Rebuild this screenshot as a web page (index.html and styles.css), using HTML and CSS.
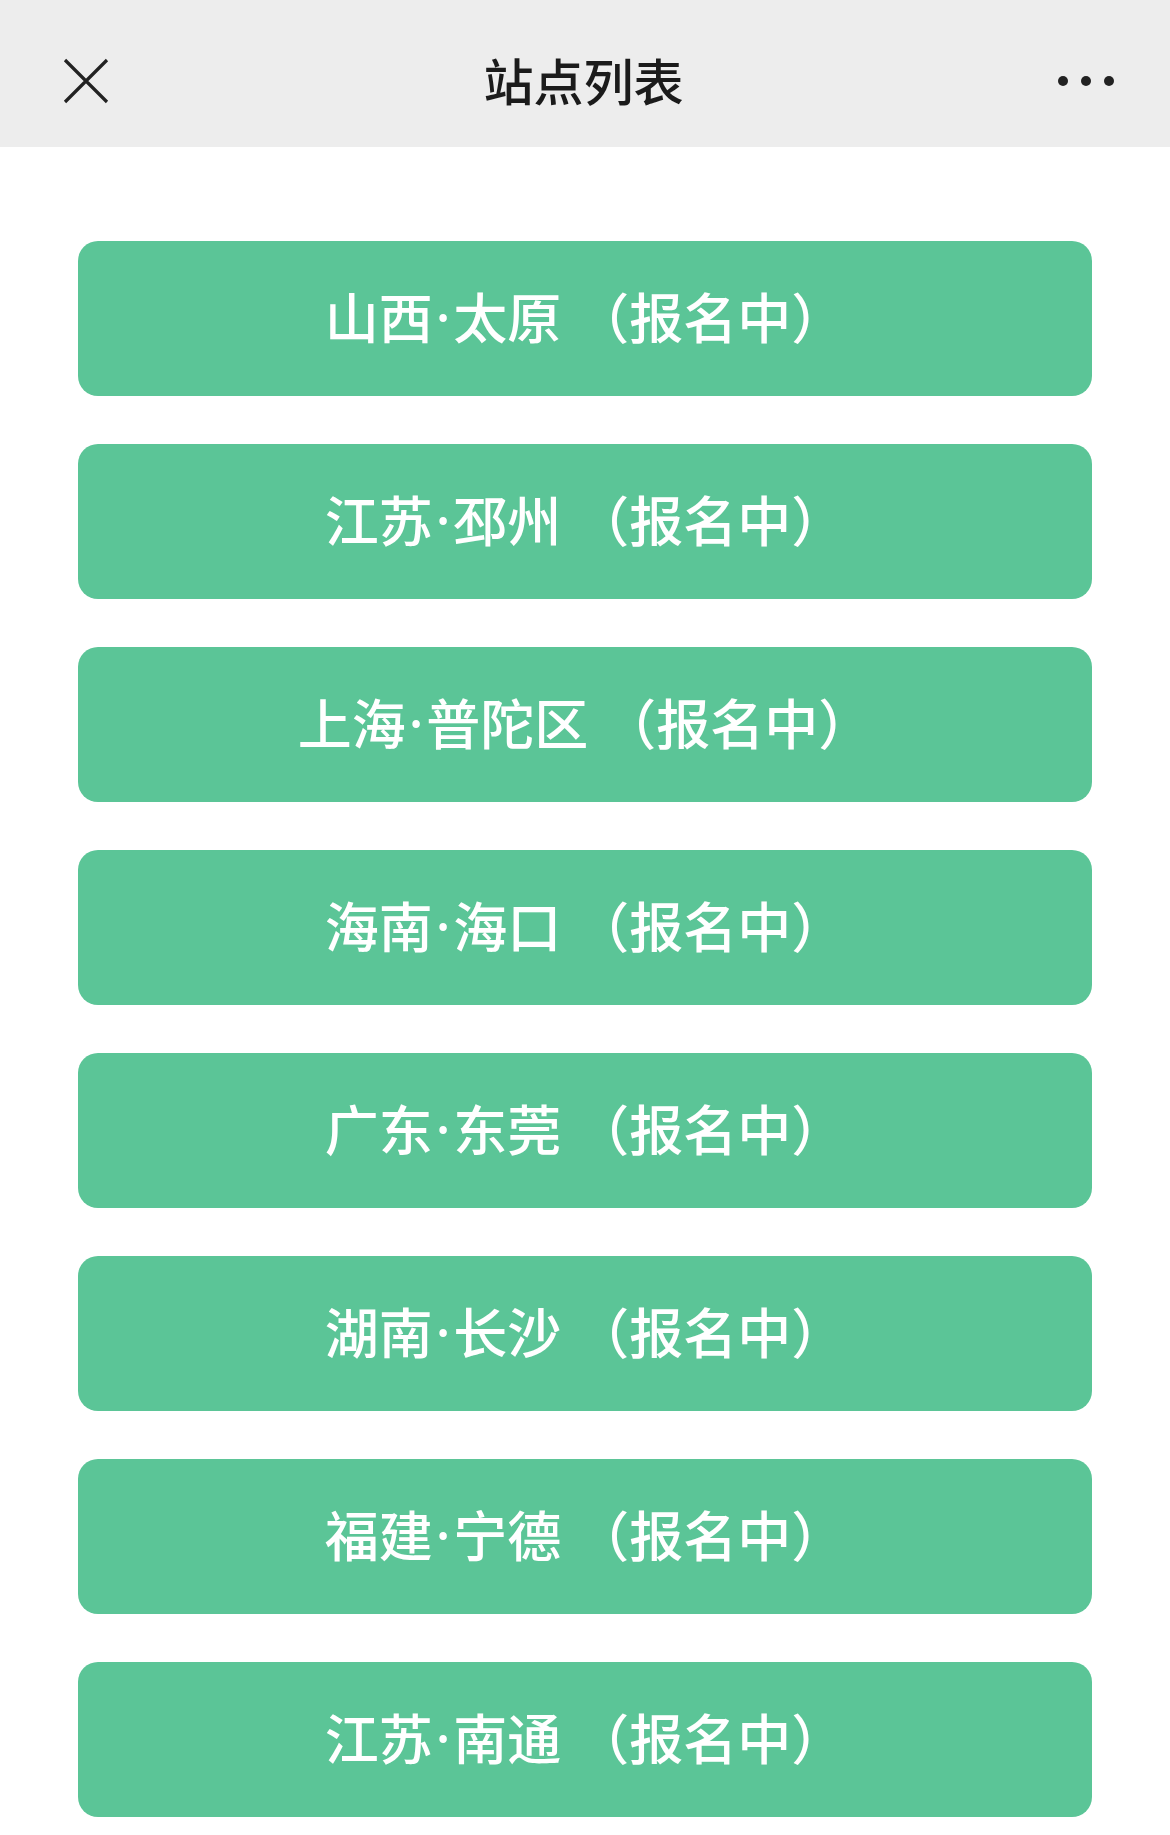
FILE: index.html
```html
<!doctype html>
<html>
<head>
  <meta charset="utf-8">
  <link rel="stylesheet" href="styles.css">
</head>
<body>
  <header class="topbar">
    <span class="close">
      <svg width="46" height="46" viewBox="0 0 46 46">
        <path d="M2 2 L44 44 M44 2 L2 44" stroke="#222" stroke-width="3.2" fill="none"/>
      </svg>
    </span>
    <h1 class="title">站点列表</h1>
    <span class="more"><i></i><i></i><i></i></span>
  </header>

  <section class="stations">
    <a class="station">山西<span class="dot">·</span>太原<span class="state">（报名中）</span></a>
    <a class="station">江苏<span class="dot">·</span>邳州<span class="state">（报名中）</span></a>
    <a class="station">上海<span class="dot">·</span>普陀区<span class="state">（报名中）</span></a>
    <a class="station">海南<span class="dot">·</span>海口<span class="state">（报名中）</span></a>
    <a class="station">广东<span class="dot">·</span>东莞<span class="state">（报名中）</span></a>
    <a class="station">湖南<span class="dot">·</span>长沙<span class="state">（报名中）</span></a>
    <a class="station">福建<span class="dot">·</span>宁德<span class="state">（报名中）</span></a>
    <a class="station">江苏<span class="dot">·</span>南通<span class="state">（报名中）</span></a>
  </section>
</body>
</html>
```

FILE: styles.css
```css
html, body {
  margin: 0;
  height: 100%;
  background: #fff;
  font-family: "Noto Sans CJK SC", "Noto Sans", sans-serif;
}
.topbar {
  height: 147px;
  background-color: #ededed;
  display: flex;
  align-items: center;
  justify-content: space-between;
  padding: 14px 56px 0 63px;
  box-sizing: border-box;
}
.close {
  width: 46px;
  height: 46px;
  display: flex;
}
.title {
  margin: 0 0 4px;
  font-size: 50px;
  font-weight: 500;
  color: #1b1b1b;
}
.more {
  width: 56px;
  display: flex;
  justify-content: space-between;
}
.more i {
  width: 10px;
  height: 10px;
  border-radius: 50%;
  background: #222;
}
.stations {
  display: flex;
  flex-direction: column;
  gap: 48px;
  padding: 94px 78px 0;
}
.station {
  height: 155px;
  box-sizing: border-box;
  padding-bottom: 6px;
  border-radius: 20px;
  background-color: #5bc597;
  color: #fff;
  font-size: 54px;
  font-weight: 500;
  display: flex;
  align-items: center;
  justify-content: center;
}
.dot {
  font-family: "Noto Sans", sans-serif;
  margin: 0 3px;
}
.state {
  margin-left: 14px;
}
```
